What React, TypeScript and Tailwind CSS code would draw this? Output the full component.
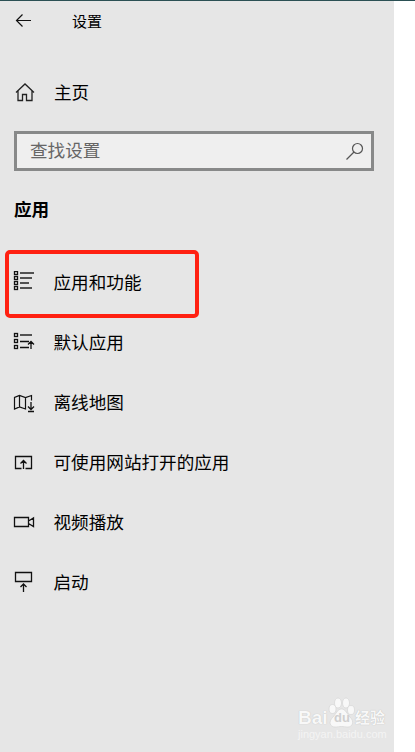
import type { ReactNode } from "react";

const TEXT = "whitespace-nowrap text-[17.6px] leading-6";

function Icon({ children }: { children: ReactNode }) {
  return (
    <svg width="24" height="24" viewBox="0 0 24 24" fill="none" stroke="#111" strokeWidth="1.2" className="shrink-0">
      {children}
    </svg>
  );
}

function Bullets({ ys }: { ys: number[] }) {
  return (
    <>
      {ys.map((y) => (
        <rect key={y} x="2.5" y={y + 0.5} width="3" height="3" strokeWidth="1.3" />
      ))}
    </>
  );
}

const items = [
  {
    label: "应用和功能",
    selected: true,
    icon: (
      <Icon>
        <Bullets ys={[0, 5, 10, 15]} />
        <path d="M8 2h14M8 7h12M8 12h9M8 17h12" stroke="#222" strokeWidth="1.4" />
      </Icon>
    ),
  },
  {
    label: "默认应用",
    icon: (
      <Icon>
        <Bullets ys={[2, 8, 14]} />
        <path d="M8 4h12" stroke="#222" strokeWidth="1.5" />
        <path d="M8 10.5h9M8 16.5h9M19 18v-7.500M16 13.500l3-3 3 3" strokeWidth="1.3" />
      </Icon>
    ),
  },
  {
    label: "离线地图",
    icon: (
      <Icon>
        <path d="M19.5 9.500V4.500L13.500 6.500 7.500 4.500 2.500 6.500V18L7.500 16l6 2V6.500M7.500 4.500V16" />
        <path d="M19 11v7.500M16 15.500l3 3 3-3M16 20.500h6" strokeWidth="1.3" />
      </Icon>
    ),
  },
  {
    label: "可使用网站打开的应用",
    icon: (
      <Icon>
        <path d="M9.500 17.500h-6v-12h16v12h-6M11.500 18V9.500M8.500 12.500l3-3 3 3" strokeWidth="1.3" />
      </Icon>
    ),
  },
  {
    label: "视频播放",
    icon: (
      <Icon>
        <path d="M2.500 6.500h14v9h-14zM16.500 10l5-3v8.500l-5-3" strokeWidth="1.3" />
      </Icon>
    ),
  },
  {
    label: "启动",
    icon: (
      <Icon>
        <path d="M3.500 1.500h16v9h-16zM11.500 21v-8M8.500 16l3-3 3 3" strokeWidth="1.3" />
      </Icon>
    ),
  },
];

function Watermark() {
  return (
    <div className="absolute left-[298px] top-[697px] h-[50px] w-[92px] text-[#f8f8f8]">
      <svg width="28" height="31" viewBox="0 0 28 31" className="absolute left-[30px] top-0" fill="#f8f8f8" stroke="#d2d2d2" strokeWidth="0.6">
        <ellipse cx="4.500" cy="12" rx="3.500" ry="4.500" />
        <ellipse cx="10" cy="6" rx="3.500" ry="5" />
        <ellipse cx="18" cy="6" rx="3.500" ry="5" />
        <ellipse cx="23" cy="13" rx="3.500" ry="4.500" />
        <path d="M13.500 12c4 0 5.500 5 8.500 8 5 5 2 10-2 10-3 0-4-.500-6.500-.500S10 30 7 30c-5 0-7-5-2-10 3-3 4.500-8 8.500-8z" />
      </svg>
      <span className="absolute left-0 top-[11px] text-[19px] font-bold leading-5 [text-shadow:0_0_1px_#b8b8b8]">Bai</span>
      <span className="absolute left-[36px] top-[13px] text-[13px] font-bold leading-4 text-[#cfcfcf]">du</span>
      <span className="absolute left-[57px] top-[11px] whitespace-nowrap text-[15px] font-bold leading-5 [text-shadow:0_0_1px_#b0b0b0]">经验</span>
      <span className="absolute left-0 top-[29px] text-[11px] leading-4 text-[#f4f4f4]">jingyan.baidu.com</span>
    </div>
  );
}

export default function App() {
  return (
    <div className="relative h-[752px] w-[415px] overflow-hidden bg-white font-['Liberation_Sans','Noto_Sans_CJK_SC',sans-serif] text-black">
      <div className="h-px bg-[#2b5054]" />
      <aside className="h-[751px] w-[394px] bg-[#e6e6e6]">
        <header className="flex h-10 items-center pl-3">
          <Icon>
            <path d="M4.500 11.500H19M10.500 5.500l-6 6 6 6" />
          </Icon>
          <h1 className="ml-9 pt-px text-[15px] leading-5">设置</h1>
        </header>

        <div className="mt-10 flex h-6 items-center pl-3">
          <Icon>
            <path d="M4 11.500l9-8.500 9 8.500M6 10v9.500h4.500v-6h4v6H20V10" stroke="#222" strokeWidth="1.3" />
          </Icon>
          <span className={`ml-[18px] ${TEXT}`}>主页</span>
        </div>

        <div className="ml-3.5 mt-[26px] flex h-10 w-[360px] items-center justify-between border-[3px] border-[#888989] bg-[#efefef] pl-[13px] pr-[5px]">
          <span className={`text-[#666] ${TEXT}`}>查找设置</span>
          <Icon>
            <path d="M12 13L4.500 20.500" stroke="#555" />
            <circle cx="15.500" cy="9.500" r="5" stroke="#555" />
          </Icon>
        </div>

        <h2 className={`ml-3.5 mt-[27px] font-bold ${TEXT}`}>应用</h2>

        <nav className="mt-[31px]">
          {items.map((item) => (
            <div key={item.label} className="relative flex h-[60px] items-center pl-3">
              {item.selected && (
                <div className="absolute -top-[3px] left-[5px] h-[68px] w-[194px] rounded-[5px] border-4 border-[#ff2112]" />
              )}
              {item.icon}
              <span className={`ml-[17.5px] ${TEXT}`}>{item.label}</span>
            </div>
          ))}
        </nav>
      </aside>
      <Watermark />
    </div>
  );
}
